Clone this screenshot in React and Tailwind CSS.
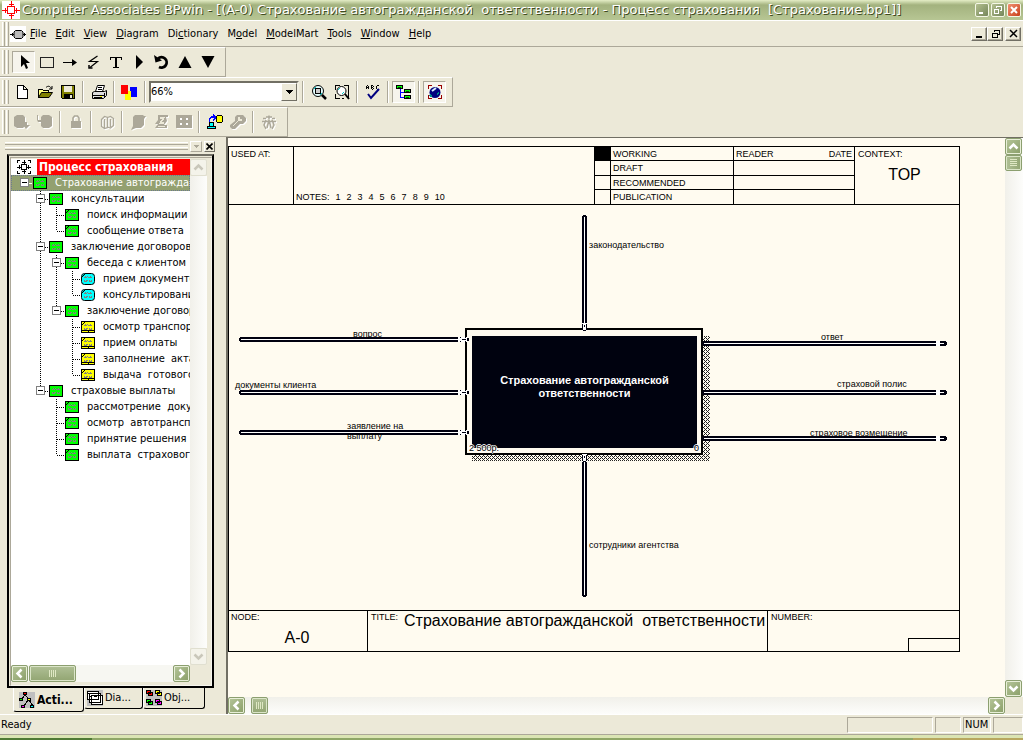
import React from 'react';

const UI = "font-['DejaVu_Sans_Condensed','DejaVu_Sans',sans-serif]";

function Svg({ w = 16, h = 16, children, className = '' }) {
  return (
    <svg width={w} height={h} viewBox={`0 0 ${w} ${h}`} fill="none" shapeRendering="crispEdges" aria-hidden="true" className={`block shrink-0 ${className}`}>
      {children}
    </svg>
  );
}

/* ---------- icons ---------- */

const AppIcon = () => (
  <Svg w={18} h={18} className="bg-white">
    <rect x="5.500" y="5.500" width="7" height="7" stroke="#f00" fill="#fff" />
    <path d="M9.500 0v5M9.500 13v5M0 9.500h5M13 9.500h5M7 3.500h5M7 14.500h5M3.500 7v5M14.500 7v5" stroke="#f00" />
  </Svg>
);
const DocIcon = () => (
  <Svg className="bg-white">
    <path d="M0 8.500h4M12 8.500h4M2.500 7v3M14.500 7v3" stroke="#000" />
    <path d="M5.500 4.500h6l1.500 1.500v5l-1.500 1.500h-6l-1.500-1.500v-5z" fill="#bbb" stroke="#000" shapeRendering="auto" />
  </Svg>
);
const Cursor = () => (
  <Svg><path d="M5 1v12l3-3 2 5 2-1-2-5h4z" fill="#000" shapeRendering="auto" /></Svg>
);
const BoxIcon = () => <Svg><rect x="1.500" y="3.500" width="13" height="10" stroke="#222" /></Svg>;
const ArrowIcon = () => <Svg><path d="M1 8.500h11" stroke="#000" /><path d="M10 5l5 3.500-5 3.500z" fill="#000" shapeRendering="auto" /></Svg>;
const Squiggle = () => <Svg><path d="M12.500 2L4.500 7.500h8L5 13.500" stroke="#000" strokeWidth="1.200" shapeRendering="auto" /><path d="M4 11v3h3.500" stroke="#000" strokeWidth="1.500" shapeRendering="auto" /></Svg>;
const TextIcon = () => (
  <Svg><path d="M2.500 6V3.500h11V6M5 13.500h6" stroke="#000" /><path d="M8 3v11" stroke="#000" strokeWidth="2" /></Svg>
);
const Right = () => <Svg><path d="M5 1v14l7-7z" fill="#000" shapeRendering="auto" /></Svg>;
const Undo = () => (
  <Svg>
    <path d="M4 4.500a5.200 5.200 0 1 1 1 8.500" stroke="#000" strokeWidth="2.800" shapeRendering="auto" />
    <path d="M0 1l1.500 7.500L8 6.500z" fill="#000" shapeRendering="auto" />
  </Svg>
);
const Up = () => <Svg><path d="M8 2l6.500 12h-13z" fill="#000" shapeRendering="auto" /></Svg>;
const Down = () => <Svg><path d="M8 14L1.500 2h13z" fill="#000" shapeRendering="auto" /></Svg>;

const NewIcon = () => <Svg><path d="M3.500 1.500h6l4 4v9h-10zM9.500 1.500v4h4" fill="#fff" stroke="#000" /></Svg>;
const OpenIcon = () => (
  <Svg>
    <path d="M1.500 13.500v-8h4l1 1h5v2" fill="#ffff80" stroke="#000" />
    <path d="M1.500 13.500l3-5h11l-3.500 5z" fill="#808000" stroke="#000" shapeRendering="auto" />
    <path d="M9 3.500c2-2 4-1.500 5.500 1M15 2v3h-3" stroke="#000" shapeRendering="auto" />
  </Svg>
);
const SaveIcon = () => (
  <Svg>
    <path d="M1.500 1.500h13v13h-12l-1-1z" fill="#808000" stroke="#000" />
    <rect x="4" y="2" width="8" height="6" fill="#ece9d8" /><rect x="4" y="10" width="9" height="5" fill="#000" /><rect x="10" y="11" width="2" height="3" fill="#ece9d8" />
  </Svg>
);
const PrintIcon = () => (
  <Svg>
    <path d="M4.500 7.500l2-6h7l-2 6" fill="#fff" stroke="#000" shapeRendering="auto" />
    <path d="M7 3.500h4M6.500 5.500h4" stroke="#000" />
    <path d="M1.500 8.500l2-1h10l2-1v5l-3 3h-11z" fill="#ddd" stroke="#000" shapeRendering="auto" />
    <path d="M1 11.500h12M3 13.500h8M13 14V9" stroke="#000" /><rect x="9" y="12" width="2" height="1" fill="#ff0" />
  </Svg>
);
const ColorsIcon = () => (
  <Svg w={17}>
    <path d="M9 3h7v10H9z" fill="#00f" /><path d="M4 7h6v9H4z" fill="#ff0" /><path d="M0 1h7v9H0z" fill="#f00" />
  </Svg>
);
const ZoomIcon = () => (
  <Svg>
    <circle cx="7" cy="7" r="5.500" fill="#e6ffff" stroke="#000" shapeRendering="auto" />
    <path d="M3 5l2-2M9 11l2-2" stroke="#0cc" /><rect x="4.500" y="4.500" width="5" height="5" stroke="#000" fill="#ccc" />
    <path d="M11 11l4 4" stroke="#000" strokeWidth="2.500" shapeRendering="auto" />
  </Svg>
);
const FitIcon = () => (
  <Svg>
    <path d="M1.500 6V1.500h4M10 1.500h4.500v13M1.500 10v4.500h4M8 14.500h2" stroke="#000" />
    <circle cx="7.500" cy="7" r="4.500" fill="#fff" stroke="#000" shapeRendering="auto" />
    <path d="M4 6l2-2M8 10l2-2" stroke="#0cc" /><path d="M11 10l4 5" stroke="#000" strokeWidth="2" shapeRendering="auto" />
  </Svg>
);
const SpellIcon = () => (
  <Svg>
    <path d="M1.500 5V2M3.500 5V2M2 1.500h1M1.500 3.500h2M6.500 1v4M7 1.500h1M7 3.500h1M7 5.500h1M8.500 2v1M8.500 4v1M11.500 2v3M12 1.500h2M12 5.500h2" stroke="#000" />
    <path d="M3 10l3 4 8-9" stroke="#000080" strokeWidth="2" shapeRendering="auto" />
  </Svg>
);
const TreeIcon = () => (
  <Svg>
    <path d="M4.500 5v8h5M4.500 8.500h5" stroke="#00f" />
    <path d="M.5 1.500h6v3h-6zM8.500 5.500h6v3h-6zM8.500 11.500h6v3h-6z" fill="#0f0" stroke="#000" strokeWidth="1.400" />
    <path d="M2 3h3M10 7h3M10 13h3" stroke="#004000" />
  </Svg>
);
const BallIcon = () => (
  <Svg>
    <circle cx="8" cy="8.500" r="5.500" fill="#000080" shapeRendering="auto" />
    <path d="M5 7l4-3" stroke="#d8f0ff" strokeWidth="2" shapeRendering="auto" />
    <path d="M3 11l2 2M10 10l2-1" stroke="#088" strokeWidth="2" />
    <path d="M1.500 5V1.500h3M11 1.500h3.500V5M1.500 11v3.500h3M11 14.500h3.500V11" stroke="#900" />
  </Svg>
);

const G = '#aca899';
const etched = '[filter:drop-shadow(1px_1px_0_#fff)]';
const CheckIn = () => <Svg w={18} className={etched}><path d="M4 1h6l2 2v9l-2 2H4l-3-2V3zM12 8h2v3h3l-4 4-3-4h2z" fill={G} shapeRendering="auto" /></Svg>;
const CheckOut = () => <Svg w={18} className={etched}><path d="M7 1h6l3 2v9l-3 2H7l-2-2V3zM1 1h1v5h3v2H2L1 6z" fill={G} shapeRendering="auto" /></Svg>;
const LockIcon = () => <Svg className={etched}><path d="M3 7h10v7H3z" fill={G} /><path d="M5 7V4l1.500-2h3L11 4v3" stroke={G} strokeWidth="1.600" shapeRendering="auto" /></Svg>;
const BookIcon = () => <Svg className={etched}><path d="M2.500 5.500l3-3 3 1v10l-3 1-3-2zM5.500 5v9M8.500 3.500l3-1 3 2v7l-3 2.500-3-1M11.500 5v8" stroke={G} strokeWidth="1.300" shapeRendering="auto" /></Svg>;
const MergeIcon = () => <Svg className={etched}><path d="M5 1h8l1 1h2l-2 3v6l-3 3H6l-5 2 2-4V3z" fill={G} shapeRendering="auto" /></Svg>;
const SplitIcon = () => <Svg className={etched}><path d="M5 1h10v2h-2l1 4-3 4h3v3H2l3-4H2l3-4z" fill={G} shapeRendering="auto" /><path d="M7 4h4L7 9h4M5 12.500h7" stroke="#ece9d8" strokeWidth="1.300" /></Svg>;
const GridIcon = () => <Svg className={etched}><path d="M0 1h16v13H0z" fill={G} /><path d="M4 4h2v2H4zM10 4h2v2h-2zM4 9h2v2H4zM10 9h2v2h-2z" fill="#fff" /></Svg>;
const ServerIcon = () => (
  <Svg w={18}>
    <path d="M3.500 8V5l2-2h4M7 1l3 2.500L7 6" stroke="#00f" strokeWidth="1.500" />
    <path d="M10.500 2.500l1-1h4l1 1v5l-1 1h-4l-1-1z" fill="#ff0" stroke="#000" />
    <path d="M3.500 8.500h4v4h-4z" fill="#0ff" stroke="#000" /><path d="M1.500 12.500h8v2h-8z" fill="#0ff" stroke="#000" />
  </Svg>
);
const WrenchIcon = () => <Svg className={etched}><path d="M7 1h6l3 3v3l-3 3h-3l-5 5H2l-2-2v-2l5-4V3z" fill={G} shapeRendering="auto" /><path d="M3 12l6-6M9 3v3h3" stroke="#ece9d8" strokeWidth="1.300" /></Svg>;
const PeopleIcon = () => (
  <Svg className={etched}>
    <path d="M8 1.500v4M5 3h6M2 4.500h3M11 4.500h3M1 7.500h14M5 6l-2 5 2 4M11 6l2 5-2 4M8 6l-2 8M8 6l2 8" stroke={G} strokeWidth="1.500" shapeRendering="auto" />
  </Svg>
);

/* ---------- chrome ---------- */

function ToolButton({ label, children, pressed, disabled }) {
  return (
    <button
      type="button" aria-label={label} disabled={disabled} aria-pressed={pressed}
      className={`flex h-[22px] w-[23px] shrink-0 items-center justify-center ${pressed ? 'border border-t-[#aca899] border-l-[#aca899] border-r-white border-b-white bg-[#f6f4ec]' : ''}`}
    >
      {children}
    </button>
  );
}
const Sep = () => (
  <div className="flex h-[22px] w-2 shrink-0 justify-center"><div className="w-0.5 border-r border-l border-l-[#aca899] border-r-white" /></div>
);
const Grip = () => (
  <div className="flex h-6 w-[10px] shrink-0 justify-center gap-px">
    <div className="w-[3px] border-r border-l border-l-white border-r-[#aca899]" />
    <div className="w-[3px] border-r border-l border-l-white border-r-[#aca899]" />
  </div>
);
function Toolbar({ label, children, end }) {
  return (
    <div role="toolbar" aria-label={label} className={`flex h-[30px] w-max items-center border-t border-r border-b border-t-white border-r-[#aca899] border-b-[#aca899] ${end}`}>
      <Grip />
      {children}
    </div>
  );
}

function CapButton({ label, close, children }) {
  return (
    <button type="button" aria-label={label} className={`flex h-[14px] w-[14px] items-center justify-center rounded-[2px] border border-[#f4f7e6] ${close ? 'bg-linear-to-br from-[#f09070] to-[#c83c14]' : 'bg-linear-to-br from-[#b4c090] to-[#75865a]'}`}>
      {children}
    </button>
  );
}
function MdiButton({ label, children }) {
  return (
    <button type="button" aria-label={label} className="flex h-[14px] w-4 items-center justify-center border border-t-white border-l-white border-r-[#716f64] border-b-[#716f64] shadow-[inset_-1px_-1px_0_#aca899]">
      {children}
    </button>
  );
}

const menus = [['F', 'ile'], ['E', 'dit'], ['V', 'iew'], ['D', 'iagram'], ['', 'Di', 'c', 'tionary'], ['', 'M', 'o', 'del'], ['M', 'odelMart'], ['T', 'ools'], ['W', 'indow'], ['H', 'elp']];

const arrows = {
  up: 'M3.500 9.500l4-4 4 4', down: 'M3.500 5.500l4 4 4-4', left: 'M9.500 3.500l-4 4 4 4', right: 'M5.500 3.500l4 4-4 4',
};
function ScrollButton({ dir, disabled }) {
  return (
    <button type="button" aria-label={`Scroll ${dir}`} disabled={disabled}
      className={`flex h-[17px] w-[17px] shrink-0 items-center justify-center rounded-[2px] border ${disabled ? 'border-[#e0dfd0] bg-[#f4f3ea]' : 'border-[#8c9f70] bg-linear-to-br from-[#b6c69a] to-[#8a9e68] shadow-[inset_0_0_0_1px_#e8efd8]'}`}>
      <Svg w={15} h={15}><path d={arrows[dir]} stroke={disabled ? '#c9c7ba' : '#fff'} strokeWidth="2.500" shapeRendering="auto" /></Svg>
    </button>
  );
}
function Thumb({ vertical, className }) {
  return (
    <div className={`flex shrink-0 items-center justify-center rounded-[2px] border border-[#8c9f70] from-[#b0c096] to-[#92a572] shadow-[inset_0_0_0_1px_#dbe5c8] ${vertical ? 'bg-linear-to-r' : 'bg-linear-to-b'} ${className}`}>
      <Svg w={8} h={8}>
        <path d={vertical ? 'M0 .5h7M0 2.500h7M0 4.500h7M0 6.500h7' : 'M.5 0v7M2.500 0v7M4.500 0v7M6.500 0v7'} stroke="#dfe8c4" />
      </Svg>
    </div>
  );
}

/* ---------- model tree ---------- */

const rows = [
  [['box0'], 'green', 'Страхование автограждан'],
  [['', 'boxv'], 'green', 'консультации'],
  [['', 'v', 'tee'], 'leaf', 'поиск информации'],
  [['', 'v', 'end'], 'leaf', 'сообщение ответа'],
  [['', 'boxv'], 'green', 'заключение договоров'],
  [['', 'v', 'boxv'], 'green', 'беседа с клиентом'],
  [['', 'v', 'v', 'tee'], 'cyan', 'прием документо'],
  [['', 'v', 'v', 'end'], 'cyan', 'консультировани'],
  [['', 'v', 'box'], 'green', 'заключение договор'],
  [['', 'v', '', 'tee'], 'yellow', 'осмотр транспор'],
  [['', 'v', '', 'tee'], 'yellow', 'прием оплаты'],
  [['', 'v', '', 'tee'], 'yellow', 'заполнение  акта'],
  [['', 'v', '', 'end'], 'yellow', 'выдача  готового'],
  [['', 'box'], 'green', 'страховые выплаты'],
  [['', '', 'tee'], 'leaf', 'рассмотрение  доку'],
  [['', '', 'tee'], 'leaf', 'осмотр  автотрансп'],
  [['', '', 'tee'], 'leaf', 'принятие решения'],
  [['', '', 'end'], 'leaf', 'выплата  страхового'],
];

function Cell({ kind }) {
  const box = kind.startsWith('box');
  const root = kind === 'box0';
  const down = kind === 'v' || kind === 'tee' || kind === 'boxv';
  return (
    <Svg>
      {kind && !root && <path d={down ? 'M8.500 0v16' : 'M8.500 0v8'} stroke="#000" strokeDasharray="1 1" />}
      {kind && kind !== 'v' && <path d="M9 8.500h7" stroke={root ? '#fff' : '#000'} strokeDasharray={root ? '0' : '1 1'} />}
      {box && <><rect x="4.500" y="3.500" width="8" height="8" fill="#fff" stroke="#808080" /><path d="M6 7.500h5" stroke="#000" /></>}
    </Svg>
  );
}
function NodeIcon({ kind }) {
  const fill = kind === 'cyan' ? '#0ff' : kind === 'yellow' ? '#ff0' : '#0f0';
  return (
    <Svg w={15} h={14} className="ml-px">
      <rect x=".5" y="1.500" width="13" height="11" rx={kind === 'cyan' ? 3 : 0} fill={fill} stroke="#000" shapeRendering={kind === 'cyan' ? 'auto' : 'crispEdges'} />
      <path d="M4 4.500h1M6 4.500h1M9 4.500h1M3 5.500h3M7 5.500h4M3 8.500h1M5 8.500h2M8 8.500h1M10 8.500h1M3 9.500h3M8 9.500h3" stroke="#808080" />
      {kind === 'yellow' && <path d="M1 10.500h12M7.500 10v3" stroke="#000" />}
      {kind !== 'green' && <path d="M1 5l3-3" stroke="#000" shapeRendering="auto" />}
    </Svg>
  );
}

function ModelTree() {
  return (
    <div className="flex min-w-0 flex-1 flex-col overflow-hidden bg-white">
      <div className="flex h-4 shrink-0">
        <div className="flex w-[26px] shrink-0 justify-center">
          <Svg><path d="M5.500 5.500h5v5h-5zM8 1v4M8 11v4M1 8h4M11 8h4M1.500 4V1.500H4M12 1.500h2.500V4M1.500 12v2.500H4M12 14.500h2.500V12M6 3.500h4M6 12.500h4M3.500 6v4M12.500 6v4" stroke="#000" /></Svg>
        </div>
        <div className="flex-1 bg-[#f00] pl-0.5 text-[12px] leading-4 font-bold whitespace-pre text-white">Процесс страхования</div>
      </div>
      <ul role="tree" aria-label="Activities">
        {rows.map(([cells, kind, label], i) => (
          <li key={label} role="treeitem" aria-level={cells.length} aria-selected={i === 0}
            className={`flex h-4 items-center pl-[5px] ${i === 0 ? 'bg-[#93a070] text-white outline-1 -outline-offset-1 outline-dotted outline-[#6c7a90]' : 'text-black'}`}>
            {cells.map((c, k) => <Cell key={k} kind={c} />)}
            <NodeIcon kind={kind} />
            <span className="pl-[7px] text-[11px] leading-4 whitespace-pre">{label}</span>
          </li>
        ))}
      </ul>
    </div>
  );
}

const ActIcon = () => (
  <Svg className="bg-[#c0c0c0]">
    <path d="M6 3L2 8M6 3l5 5M9 8l-4 6M10 8l4 6" stroke="#000" />
    <path d="M4.500.5h3v2h-3z" fill="#f00" stroke="#000" /><path d="M.5 6.500h3v2h-3z" fill="#0f0" stroke="#000" /><path d="M8.500 6.500h3v2h-3z" fill="#ff0" stroke="#000" />
    <path d="M2.500 13.500h3v2h-3z" fill="#f0f" stroke="#000" /><path d="M11.500 13.500h3v2h-3z" fill="#0ff" stroke="#000" />
  </Svg>
);
const DiaIcon = () => (
  <Svg className="bg-[#c0c0c0]">
    <path d="M4.500 5.500h11v9h-11z M2.500 3.500h11v9h-11z M.5 1.500h11v8h-11z" fill="#fff" stroke="#000" />
    <path d="M1 3.500h10M3 6.500h2M7 6.500h3" stroke="#000" />
  </Svg>
);
const ObjIcon = () => (
  <Svg className="bg-[#c0c0c0]">
    {[[0, 0, '#f00'], [9, 0, '#ff0'], [0, 9, '#0f0'], [9, 9, '#f0f']].map(([x, y, c]) => (
      <path key={c} d={`M${x + 2.5} ${y + 2.5}h4v3h-4zM${x + 0.5} ${y + 0.5}h4v3h-4z`} fill={c} stroke="#000" />
    ))}
  </Svg>
);
function Tab({ icon, label, active, className }) {
  return (
    <button type="button" role="tab" aria-selected={!!active}
      className={`flex items-center gap-0.5 rounded-b-[3px] border-r border-b border-l border-l-white border-r-black border-b-black bg-[#ece9d8] ${active ? 'h-6 pl-[5px] text-[12px] font-bold' : 'h-[21px] pl-0.5 text-[11px]'} ${className}`}>
      {icon}
      <span className="leading-4">{label}</span>
    </button>
  );
}

function Sidebar() {
  return (
    <aside className="flex w-[226px] shrink-0 flex-col pt-[3px]">
      <div className="flex h-3 items-center gap-0.5 pr-[11px] pl-[5px]">
        <div className="flex flex-1 flex-col gap-0.5">
          <div className="h-[3px] border-t border-b border-t-white border-b-[#aca899]" />
          <div className="h-[3px] border-t border-b border-t-white border-b-[#aca899]" />
        </div>
        <button type="button" aria-label="Expand panel" className="flex h-[11px] w-3 items-center justify-center border border-t-white border-l-white border-r-[#aca899] border-b-[#aca899]">
          <Svg w={5} h={3}><path d="M0 0h5L2.500 3z" fill="#aca899" /></Svg>
        </button>
        <button type="button" aria-label="Close panel" className="flex h-[11px] w-[11px] items-center justify-center border border-t-white border-l-white border-r-[#716f64] border-b-[#716f64]">
          <Svg w={7} h={7}><path d="M.5.5l6 6M6.500.5l-6 6" stroke="#000" strokeWidth="1.600" shapeRendering="auto" /></Svg>
        </button>
      </div>
      <div className="mt-0.5 mr-3 ml-[7px] flex min-h-0 flex-1 flex-col border-2 border-t-[#716f64] border-r-black border-b-black border-l-black pt-px pl-px">
        <div className="flex min-h-0 flex-1 border border-t-[#aca899] border-r-[#f6f5ee] border-b-[#f6f5ee] border-l-[#aca899] pt-px pb-[3px]">
          <div className="flex min-w-0 flex-1 flex-col">
            <ModelTree />
            <div className="flex h-[17px] bg-[#f7f7f2]">
              <ScrollButton dir="left" />
              <Thumb className="ml-px h-[17px] w-[47px]" />
              <div className="flex-1" />
              <ScrollButton dir="right" />
            </div>
          </div>
          <div className="flex w-[17px] shrink-0 flex-col">
            <ScrollButton dir="up" disabled />
            <div className="flex-1 bg-linear-to-r from-[#f1f0ea] to-[#fdfdfb]" />
            <ScrollButton dir="down" disabled />
            <div className="h-[17px]" />
          </div>
          <div className="w-1" />
        </div>
      </div>
      <div role="tablist" className="flex h-[26px] items-start pl-[13px]">
        <Tab icon={<ActIcon />} label="Acti..." active className="w-[71px]" />
        <Tab icon={<DiaIcon />} label="Dia..." className="w-[59px]" />
        <Tab icon={<ObjIcon />} label="Obj..." className="w-[62px]" />
      </div>
    </aside>
  );
}

/* ---------- IDEF0 sheet ---------- */

const INK = '#00000f';

function HPipe({ x1, x2, y, head, out }) {
  return (
    <g>
      <path d={`M${x1 + 1} ${y - 2}H${x2}v5H${x1 + 1}v-1h-1v-3h1z`} fill={INK} />
      <rect x={x1 + 2} y={y} width={x2 - x1 - 2} height="1" fill="#fff" />
      <rect x={head - 10} y={y - 2} width="9" height="5" fill="#fff" />
      {out
        ? <path d={`M${head - 6} ${y - 2}h5l2 2v1l-2 2h-5v-2h4v-1h-4z`} fill={INK} />
        : <><path d={`M${head - 8} ${y - 1.5}h1M${head - 6} ${y + 0.5}h4M${head - 8} ${y + 2.5}h1M${head - 3} ${y - 1.5}h1M${head - 3} ${y + 2.5}h1`} stroke={INK} /><path d={`M${head - 1} ${y - 1}h1l1 1v1l-1 1h-1z`} fill={INK} /></>}
    </g>
  );
}
function VPipe({ y1, y2, x, head }) {
  return (
    <g>
      <path d={`M${x - 1} ${y1}h3v1h1V${y2 - 1}h-1v1h-3v-1h-1V${y1 + 1}h1z`} fill={INK} />
      <rect x={x} y={y1 + 2} width="1" height={y2 - y1 - 4} fill="#fff" />
      <rect x={x - 2} y={head - 4} width="5" height="8" fill="#fff" />
      <path d={`M${x - 1.5} ${head - 3}v6M${x + 2.5} ${head - 3}v6M${x - 1} ${head + 3.5}h3M${x + 0.5} ${head - 2}v2`} stroke={INK} />
    </g>
  );
}

const small = "font-['Liberation_Sans',Arial,sans-serif] text-[9px] leading-[10px]";
const halo = 'text-shadow-[1px_0_0_#fff,-1px_0_0_#fff,0_1px_0_#fff,0_-1px_0_#fff]';

function Diagram() {
  return (
    <div className="relative h-[406px] border-b border-black">
      <svg width="730" height="405" viewBox="229 205 730 405" shapeRendering="crispEdges" className="block" fill="none" role="img" aria-label="Context diagram">
        <defs>
          <pattern id="hatch" width="4" height="4" patternUnits="userSpaceOnUse">
            <path d="M0 0h1v1H0zM2 0h1v1H2zM1 1h1v1H1zM0 2h1v1H0zM2 2h1v1H2zM3 3h1v1H3z" fill="#222" />
          </pattern>
        </defs>
        <path d="M703 336h7v125H472v-6h231z" fill="url(#hatch)" />
        <rect x="466" y="329" width="236" height="125" stroke="#000" strokeWidth="2" fill="#fffbf0" />
        <rect x="472" y="336" width="225" height="112" fill="#00020f" />
        <HPipe x1={239} x2={460} y={339} head={468} />
        <HPipe x1={239} x2={460} y={392} head={468} />
        <HPipe x1={239} x2={460} y={432} head={468} />
        <HPipe x1={702} x2={938} y={343} head={946} out />
        <HPipe x1={702} x2={938} y={392} head={946} out />
        <HPipe x1={702} x2={938} y={438} head={946} out />
        <VPipe x={584} y1={215} y2={327} head={327} />
        <VPipe x={584} y1={456} y2={597} head={458} />
      </svg>
      <div className={`${small} text-black`}>
        <span className="absolute top-[35px] left-[360px]">законодательство</span>
        <span className="absolute top-[335px] left-[360px]">сотрудники агентства</span>
        <span className="absolute top-[124px] left-[124px]">вопрос</span>
        <span className="absolute top-[175px] left-[6px]">документы клиента</span>
        <span className="absolute top-[216px] left-[118px]">заявление на<br />выплату</span>
        <span className="absolute top-[127px] left-[592px]">ответ</span>
        <span className="absolute top-[174px] left-[608px]">страховой полис</span>
        <span className="absolute top-[223px] left-[581px]">страховое возмещение</span>
        <span className={`absolute top-[238px] left-[240px] ${halo}`}>2 500р.</span>
        <span className={`absolute top-[238px] left-[465px] ${halo}`}>0</span>
      </div>
      <div className="absolute top-[169px] left-[243px] w-[225px] text-center font-['Liberation_Sans',Arial,sans-serif] text-[11px] leading-[13px] font-bold text-white">
        Страхование автогражданской<br />ответственности
      </div>
    </div>
  );
}

function Sheet() {
  const stages = [['WORKING', 'h-[14px] border-b', true], ['DRAFT', 'h-[15px] border-b'], ['RECOMMENDED', 'h-[14px] border-b'], ['PUBLICATION', 'h-[14px]']];
  return (
    <section className="w-[732px] border border-black text-black">
      <header className={`flex h-[58px] border-b border-black ${small}`}>
        <div className="w-[65px] border-r border-black pt-0.5 pl-0.5">USED AT:</div>
        <div className="flex w-[301px] items-end gap-1.5 border-r border-black pb-0.5 pl-0.5">
          <span>NOTES:</span>
          {[1, 2, 3, 4, 5, 6, 7, 8, 9, 10].map((n) => <span key={n}>{n}</span>)}
        </div>
        <div className="w-[260px] border-r border-black">
          {stages.map(([name, h, on], i) => (
            <div key={name} className={`flex border-black ${h}`}>
              <div className={`w-4 border-r border-black ${on ? 'bg-black' : ''}`} />
              <div className="w-[123px] border-r border-black pt-0.5 pl-0.5">{name}</div>
              {i === 0 && <div className="flex flex-1 justify-between px-0.5 pt-0.5"><span>READER</span><span>DATE</span></div>}
            </div>
          ))}
        </div>
        <div className="flex-1 pt-0.5 pl-[3px]">
          CONTEXT:
          <div className="pt-1.5 pr-2 text-center text-[16px] leading-5">TOP</div>
        </div>
      </header>
      <Diagram />
      <footer className={`flex h-10 ${small}`}>
        <div className="w-[139px] border-r border-black pt-px pl-0.5">
          NODE:
          <div className="pt-1.5 pr-1 text-center text-[16px] leading-5">A-0</div>
        </div>
        <div className="flex w-[400px] gap-1.5 border-r border-black pt-px pl-[3px] whitespace-nowrap">
          <span>TITLE:</span>
          <span className="text-[16px] leading-[18px] whitespace-pre">{'Страхование автогражданской  ответственности'}</span>
        </div>
        <div className="flex flex-1 flex-col justify-between">
          <span className="pt-px pl-[3px]">NUMBER:</span>
          <div className="h-[13px] w-[51px] self-end border-t border-l border-black" />
        </div>
      </footer>
    </section>
  );
}

const Pane = ({ className, children }) => (
  <div className={`h-4 border border-t-[#aca899] border-r-white border-b-white border-l-[#aca899] ${className}`}>{children}</div>
);

export default function App() {
  return (
    <div className={`flex h-screen min-h-[600px] flex-col overflow-hidden bg-[#ece9d8] text-black ${UI}`}>
      <header className="flex h-5 shrink-0 items-center bg-linear-to-b from-[#e4edc6] via-[#a3b27e] via-25% to-[#b7c694] pr-0.5 pl-0.5">
        <AppIcon />
        <h1 className="min-w-0 flex-1 overflow-hidden pl-0.5 font-['DejaVu_Sans',sans-serif] text-[13px] leading-5 font-normal whitespace-pre text-white text-shadow-[1px_1px_0_#3f4a1f]">
          {'Computer Associates BPwin - [(A-0) Страхование автогражданской  ответственности - Процесс страхования  [Страхование.bp1]]'}
        </h1>
        <div className="flex gap-0.5">
          <CapButton label="Minimize"><Svg w={10} h={10}><path d="M2 7h4v2H2z" fill="#fff" /></Svg></CapButton>
          <CapButton label="Restore"><Svg w={10} h={10}><path d="M3.500 3V1.500h5v4H7M1.500 4.500h4v4h-4z" stroke="#fff" /></Svg></CapButton>
          <CapButton label="Close" close><Svg w={10} h={10}><path d="M2 2l6 6M8 2L2 8" stroke="#fff" strokeWidth="2" shapeRendering="auto" /></Svg></CapButton>
        </div>
      </header>

      <div className="flex h-[27px] shrink-0 items-center border-t border-b border-t-white border-b-[#aca899] pr-0.5">
        <Grip />
        <DocIcon />
        <nav aria-label="Main menu" className="flex gap-[9px] pl-1 text-[11px] leading-4">
          {menus.map((m) => (
            <button type="button" key={m.join('')}>{m.length === 2 ? <><u>{m[0]}</u>{m[1]}</> : <>{m[1]}<u>{m[2]}</u>{m[3]}</>}</button>
          ))}
        </nav>
        <div className="ml-auto flex">
          <MdiButton label="Minimize document"><Svg w={9} h={9}><path d="M1 7h6v2H1z" fill="#000" /></Svg></MdiButton>
          <MdiButton label="Restore document"><Svg w={9} h={9}><path d="M3.500 3V1h5v4.500H6.500M1 4.500h5v4h-5zM3 1.500h6M1 4h5" stroke="#000" /></Svg></MdiButton>
          <div className="w-0.5" />
          <MdiButton label="Close document"><Svg w={9} h={9}><path d="M1 1l7 7M8 1L1 8" stroke="#000" strokeWidth="1.500" shapeRendering="auto" /></Svg></MdiButton>
        </div>
      </div>

      <div className="flex shrink-0 flex-col">
        <Toolbar label="Drawing tools" end="pr-1.5">
          <div className="w-0.5" />
          <ToolButton label="Pointer" pressed><Cursor /></ToolButton>
          <ToolButton label="Activity box"><BoxIcon /></ToolButton>
          <ToolButton label="Arrow"><ArrowIcon /></ToolButton>
          <ToolButton label="Squiggle"><Squiggle /></ToolButton>
          <ToolButton label="Text"><TextIcon /></ToolButton>
          <ToolButton label="Next sibling"><Right /></ToolButton>
          <ToolButton label="Back"><Undo /></ToolButton>
          <ToolButton label="Parent diagram"><Up /></ToolButton>
          <ToolButton label="Child diagram"><Down /></ToolButton>
        </Toolbar>
        <Toolbar label="Standard" end="pr-1.5">
          <ToolButton label="New"><NewIcon /></ToolButton>
          <ToolButton label="Open"><OpenIcon /></ToolButton>
          <ToolButton label="Save"><SaveIcon /></ToolButton>
          <Sep />
          <ToolButton label="Print"><PrintIcon /></ToolButton>
          <Sep />
          <ToolButton label="Colors"><ColorsIcon /></ToolButton>
          <Sep />
          <div className="flex h-[22px] w-[150px] border-2 border-t-[#716f64] border-r-[#f1efe2] border-b-[#f1efe2] border-l-[#716f64] bg-white">
            <select aria-label="Zoom" defaultValue="66" className="min-w-0 flex-1 appearance-none bg-white text-[11px] leading-4 outline-none">
              <option value="66">66%</option>
              <option value="100">100%</option>
            </select>
            <div className="flex w-4 items-center justify-center border border-t-white border-l-white border-r-[#716f64] border-b-[#716f64] bg-[#ece9d8]">
              <Svg w={7} h={4}><path d="M0 0h7L3.500 4z" fill="#000" /></Svg>
            </div>
          </div>
          <Sep />
          <ToolButton label="Zoom to area"><ZoomIcon /></ToolButton>
          <ToolButton label="Fit"><FitIcon /></ToolButton>
          <Sep />
          <ToolButton label="Spelling"><SpellIcon /></ToolButton>
          <Sep />
          <ToolButton label="Model Explorer" pressed><TreeIcon /></ToolButton>
          <Sep />
          <ToolButton label="ModelMart toolbar" pressed><BallIcon /></ToolButton>
        </Toolbar>
        <Toolbar label="ModelMart" end="pr-[7px]">
          <ToolButton label="Open from ModelMart" disabled><CheckIn /></ToolButton>
          <ToolButton label="Save to ModelMart" disabled><CheckOut /></ToolButton>
          <Sep />
          <ToolButton label="Lock" disabled><LockIcon /></ToolButton>
          <Sep />
          <ToolButton label="Library" disabled><BookIcon /></ToolButton>
          <Sep />
          <ToolButton label="Merge" disabled><MergeIcon /></ToolButton>
          <ToolButton label="Refresh" disabled><SplitIcon /></ToolButton>
          <ToolButton label="Versions" disabled><GridIcon /></ToolButton>
          <Sep />
          <ToolButton label="Connect"><ServerIcon /></ToolButton>
          <ToolButton label="Security" disabled><WrenchIcon /></ToolButton>
          <Sep />
          <ToolButton label="Users" disabled><PeopleIcon /></ToolButton>
        </Toolbar>
      </div>

      <main className="flex min-h-0 flex-1">
        <Sidebar />
        <div className="flex min-w-0 flex-1 flex-col border-t border-l-2 border-[#716f64]">
          <div className="flex min-h-0 flex-1">
            <div className="min-w-0 flex-1 overflow-hidden bg-[#fffbf0] pt-2">
              <Sheet />
            </div>
            <div className="flex w-[18px] shrink-0 flex-col bg-linear-to-r from-[#f1f0ea] to-[#fdfdfb]">
              <ScrollButton dir="up" />
              <Thumb vertical className="h-4 w-[17px]" />
              <div className="flex-1" />
              <ScrollButton dir="down" />
            </div>
          </div>
          <div className="flex h-[17px] shrink-0">
            <div className="flex flex-1 bg-linear-to-b from-[#f1f0ea] to-[#fdfdfb]">
              <ScrollButton dir="left" />
              <Thumb className="ml-1.5 h-[17px] w-[17px]" />
              <div className="flex-1" />
              <ScrollButton dir="right" />
            </div>
            <div className="w-[18px]" />
          </div>
        </div>
      </main>

      <footer className="flex h-5 shrink-0 items-center gap-0.5 border-t border-t-white text-[11px] leading-4">
        <span className="flex-1 pl-px">Ready</span>
        <Pane className="w-[86px]" />
        <Pane className="w-[26px]" />
        <Pane className="w-7 pl-px leading-[14px]">NUM</Pane>
        <Pane className="w-[30px]" />
      </footer>
      <div className="flex h-[6px] shrink-0 flex-col">
        <div className="h-px bg-[#aca899]" />
        <div className="h-[3px] bg-[#dbe5b4]" />
        <div className="flex h-0.5"><div className="w-[92px] bg-[#4f7a35]" /><div className="flex-1 bg-[#8fa768]" /><div className="w-[110px] bg-[#b8a860]" /></div>
      </div>
    </div>
  );
}
